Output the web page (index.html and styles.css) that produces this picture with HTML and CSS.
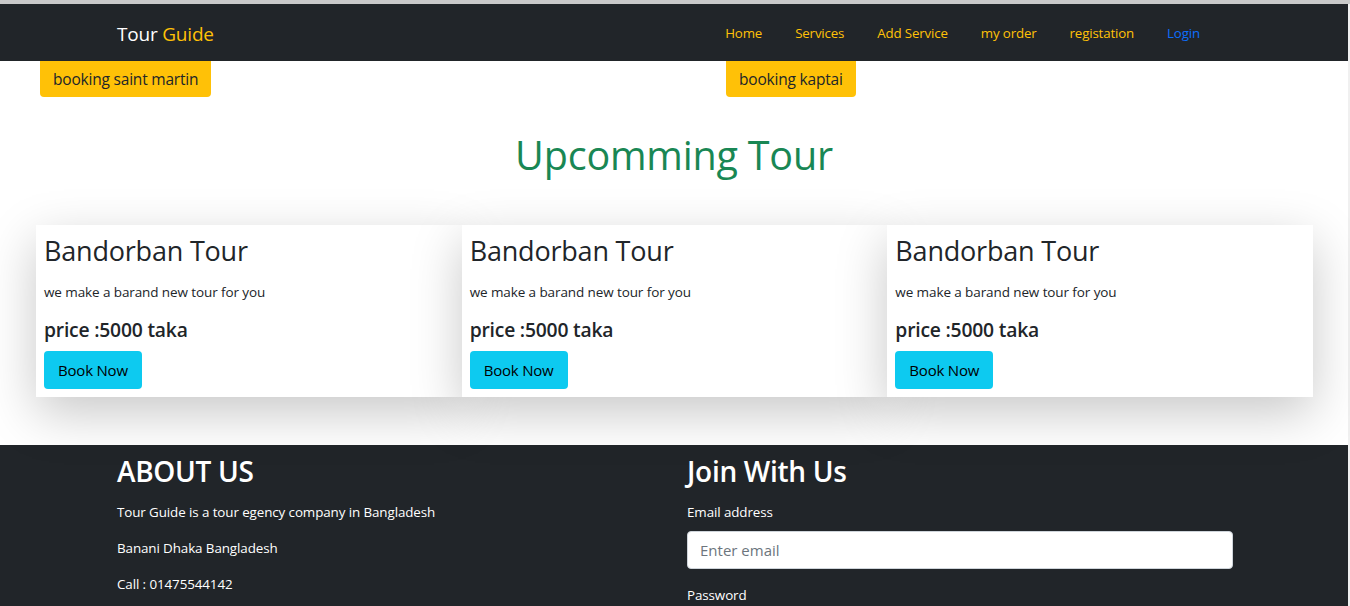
FILE: index.html
```html
<!DOCTYPE html>
<html lang="en">
<head>
<meta charset="utf-8">
<title>Tour Guide</title>
<link rel="stylesheet" href="styles.css">
</head>
<body>
<div class="page">
  <header class="navbar">
    <div class="container nav-inner">
      <a class="brand" href="#">Tour <span class="brand-accent">Guide</span></a>
      <nav class="nav-links">
        <a href="#" class="nav-link">Home</a>
        <a href="#" class="nav-link">Services</a>
        <a href="#" class="nav-link">Add Service</a>
        <a href="#" class="nav-link">my order</a>
        <a href="#" class="nav-link">registation</a>
        <a href="#" class="nav-link nav-login">Login</a>
      </nav>
    </div>
  </header>

  <div class="booking-row">
    <div class="booking-col booking-left"><button class="btn-warning">booking saint martin</button></div>
    <div class="booking-col booking-right"><button class="btn-warning">booking kaptai</button></div>
  </div>

  <h1 class="section-title">Upcomming Tour</h1>

  <div class="cards">
    <div class="card">
      <h2 class="card-title">Bandorban Tour</h2>
      <p class="card-text">we make a barand new tour for you</p>
      <h5 class="card-price">price :5000 taka</h5>
      <button class="btn-info">Book Now</button>
    </div>
    <div class="card">
      <h2 class="card-title">Bandorban Tour</h2>
      <p class="card-text">we make a barand new tour for you</p>
      <h5 class="card-price">price :5000 taka</h5>
      <button class="btn-info">Book Now</button>
    </div>
    <div class="card">
      <h2 class="card-title">Bandorban Tour</h2>
      <p class="card-text">we make a barand new tour for you</p>
      <h5 class="card-price">price :5000 taka</h5>
      <button class="btn-info">Book Now</button>
    </div>
  </div>

  <footer class="footer">
    <div class="container footer-grid">
      <div class="footer-col">
        <h2 class="footer-title">ABOUT US</h2>
        <p class="footer-text">Tour Guide is a tour egency company in Bangladesh</p>
        <p class="footer-text">Banani Dhaka Bangladesh</p>
        <p class="footer-text">Call : 01475544142</p>
      </div>
      <div class="footer-col">
        <h2 class="footer-title">Join With Us</h2>
        <form class="join-form">
          <label class="form-label" for="email">Email address</label>
          <input class="form-control" id="email" type="email" placeholder="Enter email">
          <label class="form-label label-gap" for="pw">Password</label>
          <input class="form-control" id="pw" type="password" placeholder="Password">
        </form>
      </div>
    </div>
  </footer>
</div>
</body>
</html>
```

FILE: styles.css
```css
* { box-sizing: border-box; }

html, body {
  margin: 0;
  padding: 0;
}

body {
  background: #f0f0f0;
  border-top: 4px solid #c9c9c9;
  font-family: "Open Sans", "Noto Sans", "Liberation Sans", sans-serif;
  color: #212529;
}

.page {
  background: #ffffff;
  margin-right: 2px;
}

.container {
  width: 1140px;
  margin: 0 auto;
  padding: 0 11px 0 13px;
}

/* NAVBAR */
.navbar {
  background: #212529;
  height: 57px;
}

.nav-inner {
  display: flex;
  align-items: center;
  justify-content: space-between;
  height: 100%;
}

.brand {
  color: #ffffff;
  text-decoration: none;
  font-size: 19px;
  letter-spacing: -0.2px;
  margin-top: 3px;
}

.brand-accent { color: #ffc107; }

.nav-links {
  display: flex;
  align-items: center;
  margin-right: 17px;
  margin-top: 1px;
}

.nav-link {
  color: #ffc107;
  text-decoration: none;
  font-size: 13.3px;
  letter-spacing: -0.15px;
  padding: 8px 16.5px;
}

.nav-link:last-child { padding-right: 16px; }

.nav-login { color: #0d6efd; }

/* BOOKING */
.booking-row {
  display: flex;
}

.booking-col {
  flex: 1 1 0;
}

.booking-left { padding-left: 40px; }
.booking-right { padding-left: 64px; }

.btn-warning {
  font-family: inherit;
  background: #ffc107;
  border: 0;
  border-radius: 0 0 4px 4px;
  color: #212529;
  font-size: 15.5px;
  letter-spacing: -0.2px;
  height: 36px;
  padding: 0 13px;
}

/* TITLE */
.section-title {
  margin: 34px 0 0;
  text-align: center;
  color: #198754;
  font-size: 39.5px;
  font-weight: 500;
  line-height: 48px;
  letter-spacing: -0.2px;
}

/* CARDS */
.cards {
  display: flex;
  margin: 46px 35px 0 36px;
}

.card {
  flex: 1 1 0;
  background: #ffffff;
  padding: 7px 8px 8px 8px;
  box-shadow: 0 16px 48px rgba(0, 0, 0, 0.22);
}

.card-title {
  margin: 0;
  font-size: 27px;
  font-weight: 500;
  line-height: 38px;
  letter-spacing: -0.2px;
}

.card-text {
  margin: 12px 0 0;
  font-size: 13.5px;
  line-height: 20px;
  letter-spacing: -0.1px;
}

.card-price {
  margin: 16px 0 0;
  font-size: 19.3px;
  font-weight: 600;
  line-height: 24px;
  letter-spacing: -0.2px;
}

.btn-info {
  font-family: inherit;
  margin-top: 9px;
  background: #0dcaf0;
  border: 0;
  border-radius: 4px;
  color: #000000;
  font-size: 15px;
  letter-spacing: -0.2px;
  height: 38px;
  padding: 0 14px;
}

/* FOOTER */
.footer {
  margin-top: 48px;
  background: #212529;
  color: #ffffff;
  height: 161px;
  overflow: hidden;
  padding-top: 7px;
}

.footer-grid {
  display: grid;
  grid-template-columns: 1fr 1fr;
  column-gap: 24px;
}

.footer-title {
  margin: 0;
  font-size: 28px;
  font-weight: 600;
  line-height: 38px;
  letter-spacing: -0.3px;
}

.footer-text {
  margin: 12px 0 0;
  font-size: 13.4px;
  line-height: 21px;
  letter-spacing: -0.1px;
}

.footer-text + .footer-text { margin-top: 15px; }

.join-form {
  display: flex;
  flex-direction: column;
  margin-top: 12px;
}

.form-label {
  font-size: 13.4px;
  line-height: 21px;
  letter-spacing: -0.1px;
  margin-bottom: 8px;
}

.label-gap { margin-top: 16px; }

.form-control {
  font-family: inherit;
  width: 100%;
  height: 38px;
  border: 1px solid #ced4da;
  border-radius: 4px;
  padding: 0 12px;
  font-size: 15px;
  color: #212529;
  background: #ffffff;
}

.form-control::placeholder { color: #6c757d; }
```
